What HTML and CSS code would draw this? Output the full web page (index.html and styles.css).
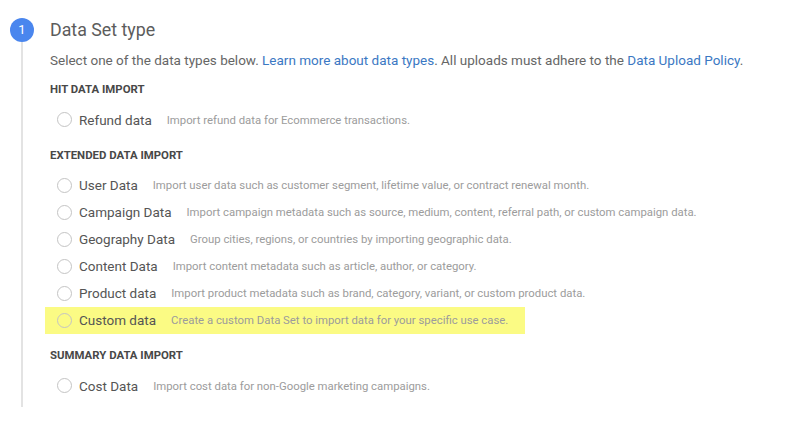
FILE: index.html
```html
<!DOCTYPE html>
<html>
  <head>
    <meta charset="UTF-8" />
    <title>Data Set type</title>
    <link rel="stylesheet" href="styles.css">
  </head>
  <body>
    <div class="step">
      <div class="rail">
        <div class="badge">1</div>
        <div class="line"></div>
      </div>
      <div class="content">
        <h1 class="title">Data Set type</h1>
        <p class="intro">Select one of the data types below. <a href="#">Learn more about data types</a>. All uploads must adhere to the <a href="#">Data Upload Policy</a>.</p>

        <h2 class="group first">HIT DATA IMPORT</h2>
        <label class="option"><span class="radio"></span><span class="name">Refund data</span><span class="desc">Import refund data for Ecommerce transactions.</span></label>

        <h2 class="group">EXTENDED DATA IMPORT</h2>
        <label class="option"><span class="radio"></span><span class="name">User Data</span><span class="desc">Import user data such as customer segment, lifetime value, or contract renewal month.</span></label>
        <label class="option"><span class="radio"></span><span class="name">Campaign Data</span><span class="desc">Import campaign metadata such as source, medium, content, referral path, or custom campaign data.</span></label>
        <label class="option"><span class="radio"></span><span class="name">Geography Data</span><span class="desc">Group cities, regions, or countries by importing geographic data.</span></label>
        <label class="option"><span class="radio"></span><span class="name">Content Data</span><span class="desc">Import content metadata such as article, author, or category.</span></label>
        <label class="option"><span class="radio"></span><span class="name">Product data</span><span class="desc">Import product metadata such as brand, category, variant, or custom product data.</span></label>
        <label class="option highlight"><span class="radio"></span><span class="name">Custom data</span><span class="desc">Create a custom Data Set to import data for your specific use case.</span></label>

        <h2 class="group">SUMMARY DATA IMPORT</h2>
        <label class="option"><span class="radio"></span><span class="name">Cost Data</span><span class="desc">Import cost data for non-Google marketing campaigns.</span></label>
      </div>
    </div>
  </body>
</html>
```

FILE: styles.css
```css
* { box-sizing: border-box; }
body {
	margin: 0;
	background: #fff;
	font-family: Roboto, "Liberation Sans", sans-serif;
}
a {
	color: #3b78c3;
	text-decoration: none;
}
.step {
	display: flex;
	padding: 18px 0 0 10px;
}
.rail {
	width: 24px;
	display: flex;
	flex-direction: column;
	align-items: center;
}
.badge {
	width: 24px;
	height: 24px;
	border-radius: 50%;
	background: #4a86ee;
	color: #fff;
	font-size: 13px;
	line-height: 24px;
	text-align: center;
}
.line {
	flex: 1;
	width: 2px;
	background: #e3e3e3;
}
.content {
	margin-left: 16px;
	padding-bottom: 8px;
}
.title {
	margin: 0;
	font-size: 17.8px;
	font-weight: 400;
	line-height: 24px;
	color: #5c5c5c;
}
.intro {
	margin: 8px 0 0;
	font-size: 13.5px;
	line-height: 20px;
	color: #666;
}
.group {
	margin: 13.5px 0 9px;
	font-size: 11.4px;
	font-weight: 700;
	line-height: 16px;
	color: #484848;
}
.group.first { margin-top: 11px; }
.option {
	display: flex;
	align-items: center;
	width: fit-content;
	height: 27px;
	margin-left: -5px;
	padding: 0 17px 0 12px;
}
.radio {
	width: 15px;
	height: 15px;
	border: 1px solid #c4c4c4;
	border-radius: 50%;
}
.name {
	margin-left: 7px;
	font-size: 13.5px;
	color: #555;
}
.desc {
	margin-left: 15px;
	font-size: 11.35px;
	color: #9c9c9c;
}
.highlight {
	background: #fbfb84;
}
```
